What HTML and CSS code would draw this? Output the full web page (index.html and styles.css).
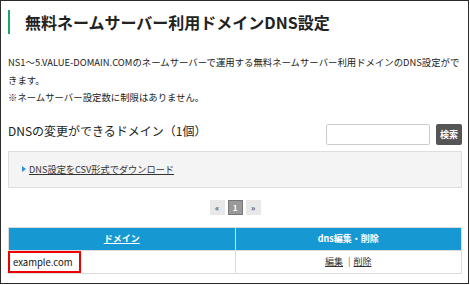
FILE: index.html
```html
<!DOCTYPE html>
<html lang="ja">

<head>
    <meta charset="UTF-8">
    <meta name="viewport" content="width=device-width, initial-scale=1.0">
    <title>無料ネームサーバー利用ドメインDNS設定</title>
    <link rel="stylesheet" href="styles.css">
</head>

<body>

    <div class="page-frame">
        <h1 class="page-title">無料ネームサーバー利用ドメインDNS設定</h1>

        <p class="intro">NS1～5.VALUE-DOMAIN.COMのネームサーバーで運用する無料ネームサーバー利用ドメインのDNS設定ができます。<br>※ネームサーバー設定数に制限はありません。</p>

        <div class="list-head">
            <h2>DNSの変更ができるドメイン（1個）</h2>
            <form class="search-form">
                <input type="text" class="search-input">
                <button type="button" class="search-btn">検索</button>
            </form>
        </div>

        <div class="download-box">
            <a href="#" class="download-link">DNS設定をCSV形式でダウンロード</a>
        </div>

        <ul class="pager">
            <li><a href="#">&laquo;</a></li>
            <li class="is-current"><span>1</span></li>
            <li><a href="#">&raquo;</a></li>
        </ul>

        <table class="domain-table">
            <thead>
                <tr>
                    <th><a href="#">ドメイン</a></th>
                    <th>dns編集・削除</th>
                </tr>
            </thead>
            <tbody>
                <tr>
                    <td class="domain-name"><span class="marked">example.com</span></td>
                    <td class="actions"><a href="#">編集</a><span class="sep">|</span><a href="#">削除</a></td>
                </tr>
            </tbody>
        </table>
    </div>

</body>

</html>
```

FILE: styles.css
```css
/* --- Base --- */
body {
    margin: 0;
    font-family: "Noto Sans CJK JP", "Noto Sans", sans-serif;
    color: #222;
    background: #fff;
}

.page-frame {
    box-sizing: border-box;
    width: 469px;
    height: 284px;
    border: 1px solid #2b2b2b;
    padding: 9px 6px 0 7px;
    overflow: hidden;
}

/* --- Title --- */
.page-title {
    margin: 0;
    border-left: 2px solid #1ba66b;
    padding-left: 15px;
    font-size: 16px;
    line-height: 24px;
    font-weight: bold;
    color: #222;
}

.intro {
    margin: 20px -3px 0 0;
    font-size: 9.4px;
    line-height: 17.5px;
    color: #222;
}

/* --- List header with search --- */
.list-head {
    display: flex;
    align-items: flex-start;
    justify-content: space-between;
    margin-top: 15px;
}

.list-head h2 {
    margin: 0;
    font-size: 12px;
    line-height: 18px;
    font-weight: normal;
    color: #222;
}

.search-form {
    display: flex;
    gap: 6px;
    margin: 2px 0 0;
}

.search-input {
    box-sizing: border-box;
    width: 104px;
    height: 21px;
    border: 1px solid #ccc;
    border-radius: 2px;
    padding: 0 4px;
}

.search-btn {
    box-sizing: border-box;
    height: 21px;
    padding: 0 4px;
    border: none;
    border-radius: 2px;
    background: #555;
    color: #fff;
    font-family: inherit;
    font-size: 9px;
    font-weight: bold;
}

/* --- Download box --- */
.download-box {
    margin-top: 6px;
    height: 37px;
    box-sizing: border-box;
    border: 1px solid #ddd;
    background: #f4f4f4;
    display: flex;
    align-items: center;
    padding-left: 13px;
}

.download-link {
    font-size: 9.2px;
    color: #333;
    text-decoration: underline;
}

.download-link::before {
    content: '';
    display: inline-block;
    border-left: 4px solid #2d8fd3;
    border-top: 3px solid transparent;
    border-bottom: 3px solid transparent;
    margin-right: 3px;
    vertical-align: 1px;
}

/* --- Pager --- */
.pager {
    list-style: none;
    display: flex;
    justify-content: center;
    gap: 3px;
    margin: 12px 0 0;
    padding: 0;
}

.pager a,
.pager span {
    display: block;
    box-sizing: border-box;
    width: 15px;
    height: 15px;
    line-height: 15px;
    text-align: center;
    font-size: 8px;
    font-weight: bold;
    text-decoration: none;
    background: #e8e8e8;
    color: #555;
}

.pager .is-current span {
    background: #999;
    border: 1px solid #777;
    line-height: 13px;
    color: #fff;
}

/* --- Domain table --- */
.domain-table {
    width: 100%;
    margin-top: 12px;
    border-collapse: collapse;
    font-size: 9px;
}

.domain-table th {
    background: #1699d2;
    color: #fff;
    height: 22px;
    padding: 0;
    font-weight: bold;
    border: 1px solid #dcdcdc;
    width: 50%;
}

.domain-table th a {
    color: #fff;
}

.domain-table td {
    height: 22px;
    padding: 0;
    border: 1px solid #dcdcdc;
}

.marked {
    display: inline-block;
    box-sizing: border-box;
    height: 22px;
    vertical-align: top;
    font-size: 9.5px;
    line-height: 18px;
    color: #111;
    padding: 0 6px 0 3px;
    border: 2px solid #e00;
    margin-left: -1px;
}

.actions {
    text-align: center;
}

.actions a {
    color: #333;
}

.actions .sep {
    margin: 0 3px 0 5px;
    color: #666;
}
```
